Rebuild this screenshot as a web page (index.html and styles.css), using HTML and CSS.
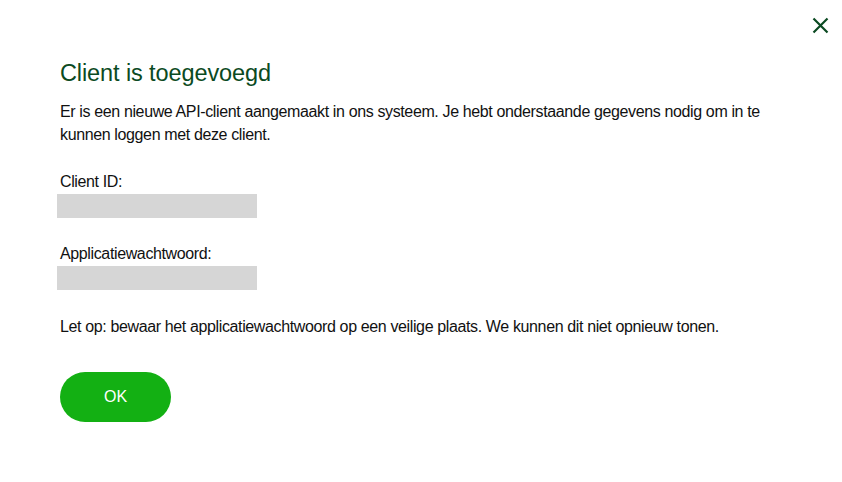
FILE: index.html
```html
<!DOCTYPE html>
<html lang="nl">
<head>
  <meta charset="UTF-8" />
  <meta name="viewport" content="width=device-width, initial-scale=1.0"/>
  <title>Client is toegevoegd</title>
  <link rel="stylesheet" href="styles.css">
</head>
<body>
  <div class="dialog">
    <div class="top">
      <button class="close" aria-label="Sluiten">
        <svg width="17" height="17" viewBox="0 0 17 17">
          <path d="M1.5 1.5 L15.5 15.5 M15.5 1.5 L1.5 15.5" stroke="#0b4a22" stroke-width="2.2" fill="none"/>
        </svg>
      </button>
    </div>
    <h2>Client is toegevoegd</h2>
    <p class="intro">Er is een nieuwe API-client aangemaakt in ons systeem. Je hebt onderstaande gegevens nodig om in te kunnen loggen met deze client.</p>

    <div class="field">
      <div class="label">Client ID:</div>
      <div class="value"></div>
    </div>

    <div class="field">
      <div class="label">Applicatiewachtwoord:</div>
      <div class="value"></div>
    </div>

    <p class="note">Let op: bewaar het applicatiewachtwoord op een veilige plaats. We kunnen dit niet opnieuw tonen.</p>

    <button class="ok">OK</button>
  </div>
</body>
</html>
```

FILE: styles.css
```css
* {
  margin: 0; padding: 0;
  box-sizing: border-box;
  font-family: "Liberation Sans", Arial, sans-serif;
}
body {
  background-color: #fff;
  color: #111;
}
.dialog {
  width: 842px;
  padding: 0 60px;
}
.top {
  display: flex;
  justify-content: flex-end;
  height: 59px;
  padding-top: 17px;
  margin-right: -47px;
}
.close {
  background: none;
  border: none;
  width: 17px;
  height: 17px;
  cursor: pointer;
}
h2 {
  font-size: 23.5px;
  line-height: 28px;
  font-weight: normal;
  letter-spacing: -0.1px;
  color: #0b4a22;
}
.intro {
  margin-top: 13px;
  font-size: 16px;
  line-height: 23px;
  letter-spacing: -0.37px;
  width: 720px;
}
.field {
  margin-top: 24px;
}
.label {
  font-size: 16px;
  line-height: 23px;
  letter-spacing: -0.37px;
}
.value {
  width: 200px;
  height: 24px;
  margin-left: -3px;
  margin-top: 1px;
  background-color: #d6d6d6;
}
.note {
  margin-top: 25px;
  font-size: 16px;
  line-height: 23px;
  letter-spacing: -0.37px;
}
.ok {
  margin-top: 34px;
  width: 111px;
  height: 50px;
  border: none;
  border-radius: 25px;
  background-color: #13b013;
  color: #fff;
  font-size: 16px;
  cursor: pointer;
}
```
